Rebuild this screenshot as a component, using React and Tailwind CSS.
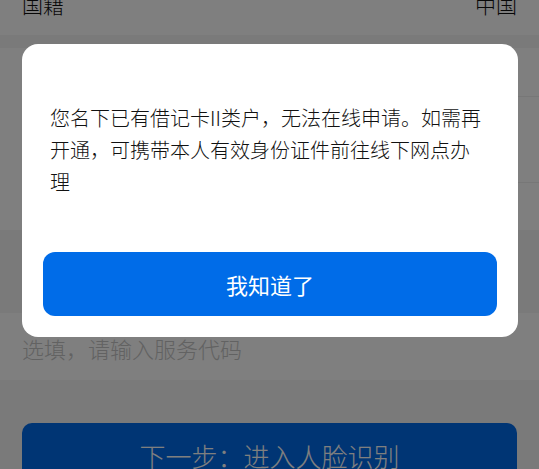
import React from 'react';

const font = { fontFamily: '"Noto Sans CJK SC", "Noto Sans", sans-serif' };

const App = () => {
  return (
    <div className="relative h-[469px] overflow-hidden bg-[#f4f4f4]" style={font}>
      {/* page under the dialog */}
      <div className="flex h-[35px] justify-between bg-white px-[22px] text-[21px] font-light leading-[22px] text-[#111]">
        <span className="-mt-[7px]">国籍</span>
        <span className="-mt-[7px]">中国</span>
      </div>
      <div className="h-[13px]" />
      <div className="bg-white">
        <div className="ml-[22px] h-[49px] border-b border-[#eeeeee]" />
        <div className="ml-[22px] h-[86px] border-b border-[#eeeeee]" />
        <div className="h-[47px]" />
      </div>
      <div className="h-[83px]" />
      <div className="flex h-[67px] items-center bg-white px-[22px] pt-[3px] text-[22px] font-light text-[#c4c4c4]">
        选填，请输入服务代码
      </div>
      <div className="px-[22px] pt-[43px]">
        <button className="flex h-[64px] w-full items-center justify-center rounded-[10px] bg-[#006ae8] text-[26px] font-light text-white">
          下一步：进入人脸识别
        </button>
      </div>

      {/* overlay */}
      <div className="absolute inset-0 bg-black/50" />

      {/* dialog */}
      <div className="absolute left-[22px] top-[44px] w-[496px] rounded-[16px] bg-white px-[21px] pb-[21px] pt-[58px]">
        <p className="pl-[7px] pr-[11px] text-[20px] font-light leading-[32px] text-[#111]">
          您名下已有借记卡II类户，无法在线申请。如需再开通，可携带本人有效身份证件前往线下网点办理
        </p>
        <button className="mt-[54px] flex h-[64px] w-full items-center justify-center rounded-[12px] bg-[#006ce8] text-[22px] text-white">
          我知道了
        </button>
      </div>
    </div>
  );
};

export default App;
